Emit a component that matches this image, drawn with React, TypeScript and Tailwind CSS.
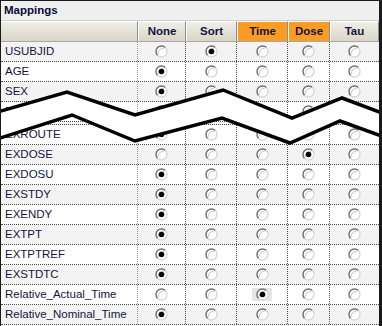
import React from 'react';

const columns = [
  { label: 'None', orange: false },
  { label: 'Sort', orange: false },
  { label: 'Time', orange: true },
  { label: 'Dose', orange: true },
  { label: 'Tau', orange: false },
];

// sel: index of the checked column, shade: grey row background
const topRows = [
  { name: 'USUBJID', sel: 1, shade: true },
  { name: 'AGE', sel: 0, shade: false },
  { name: 'SEX', sel: 0, shade: true },
  { name: 'RACE', sel: 0, shade: false },
];

const bottomRows = [
  { name: 'EXROUTE', sel: 0, shade: false },
  { name: 'EXDOSE', sel: 3, shade: true },
  { name: 'EXDOSU', sel: 0, shade: false },
  { name: 'EXSTDY', sel: 0, shade: true },
  { name: 'EXENDY', sel: 0, shade: false },
  { name: 'EXTPT', sel: 0, shade: true },
  { name: 'EXTPTREF', sel: 0, shade: false },
  { name: 'EXSTDTC', sel: 0, shade: true },
  { name: 'Relative_Actual_Time', sel: 2, shade: false, focus: true },
  { name: 'Relative_Nominal_Time', sel: 0, shade: true },
];

const Radio = ({ checked }: { checked: boolean }) => (
  <svg width="13" height="13" viewBox="0 0 13 13" className="block">
    <circle cx="6.5" cy="6.5" r="5.5" fill="#ffffff" />
    <path d="M 2.61 10.39 A 5.5 5.5 0 0 1 10.39 2.61" fill="none" stroke="#6e6e6e" strokeWidth="1.4" />
    <path d="M 10.39 2.61 A 5.5 5.5 0 0 1 2.61 10.39" fill="none" stroke="#d8d8d8" strokeWidth="1.4" />
    <path d="M 3.7 8.8 A 4.1 4.1 0 0 1 8.8 3.7" fill="none" stroke="#bdbdbd" strokeWidth="0.9" />
    {checked && <circle cx="6.5" cy="6.5" r="2.8" fill="#000000" />}
  </svg>
);

const gridCols = 'grid grid-cols-[137px_48px_51px_51px_42px_49px]';

const Row = ({ row }: { row: { name: string; sel: number; shade: boolean; focus?: boolean } }) => (
  <div
    className={`${gridCols} h-[20px] border-b border-dotted border-[#4a4a4a] ${
      row.shade ? 'bg-[#f3f3f3]' : 'bg-white'
    }`}
  >
    <div className="flex items-center pl-[4px] border-r border-dotted border-[#7f95bb] text-[11.5px] text-[#14143c] whitespace-nowrap overflow-hidden">
      {row.name}
    </div>
    {columns.map((c, i) => (
      <div
        key={c.label}
        className={`flex items-center justify-center ${i < 4 ? 'border-r border-dotted border-[#4a4a4a]' : ''}`}
      >
        {row.focus && i === row.sel ? (
          <span className="flex items-center justify-center w-[20px] h-[13px] bg-[#e6e6e6]">
            <Radio checked />
          </span>
        ) : (
          <Radio checked={i === row.sel} />
        )}
      </div>
    ))}
  </div>
);

const App = () => {
  const top = '-6,113 67,92 135,115 223,90 292,118 342,98 390,116';
  const bottom = '-6,140 72,115 135,141 222,118 290,143 340,121 390,139';
  const fill = `${top} ${bottom.split(' ').reverse().join(' ')}`;

  return (
    <div
      className="relative w-[382px] h-[326px] overflow-hidden bg-white border-l border-t border-r-[3px] border-[#1a1a1a]"
      style={{ fontFamily: '"Liberation Sans", Arial, sans-serif' }}
    >
      <div className="h-[20px] flex items-center pl-[3px] bg-[#efefef] border-b border-[#cfcfcf] text-[11.5px] font-bold text-[#0a0a3c]">
        Mappings
      </div>

      <div className={`${gridCols} h-[21px] border-b border-[#a9a9a9]`}>
        <div className="bg-gradient-to-b from-[#f0efe8] to-[#d8d5c7] border-t border-white border-r border-r-[#8f8f8f]" />
        {columns.map((c) => (
          <div
            key={c.label}
            className={`flex items-center justify-center text-[11.5px] font-bold text-[#14143c] border-l border-t border-white border-r border-r-[#8f8f8f] ${
              c.orange ? 'bg-[#fd9c24]' : 'bg-gradient-to-b from-[#f0efe8] to-[#d8d5c7]'
            }`}
          >
            {c.label}
          </div>
        ))}
      </div>

      {topRows.map((r) => (
        <Row key={r.name} row={r} />
      ))}
      <div className="h-[3px] bg-[#f3f3f3] border-b border-dotted border-[#4a4a4a]" />
      {bottomRows.map((r) => (
        <Row key={r.name} row={r} />
      ))}

      {/* torn-out break between the two halves of the list */}
      <svg className="absolute left-[-1px] top-[-1px] pointer-events-none" width="382" height="326" viewBox="0 0 382 326">
        <polygon points={fill} fill="#ffffff" />
        <polyline points={top} fill="none" stroke="#000000" strokeWidth="3.5" strokeLinejoin="miter" />
        <polyline points={bottom} fill="none" stroke="#000000" strokeWidth="3.5" strokeLinejoin="miter" />
      </svg>
    </div>
  );
};

export default App;
